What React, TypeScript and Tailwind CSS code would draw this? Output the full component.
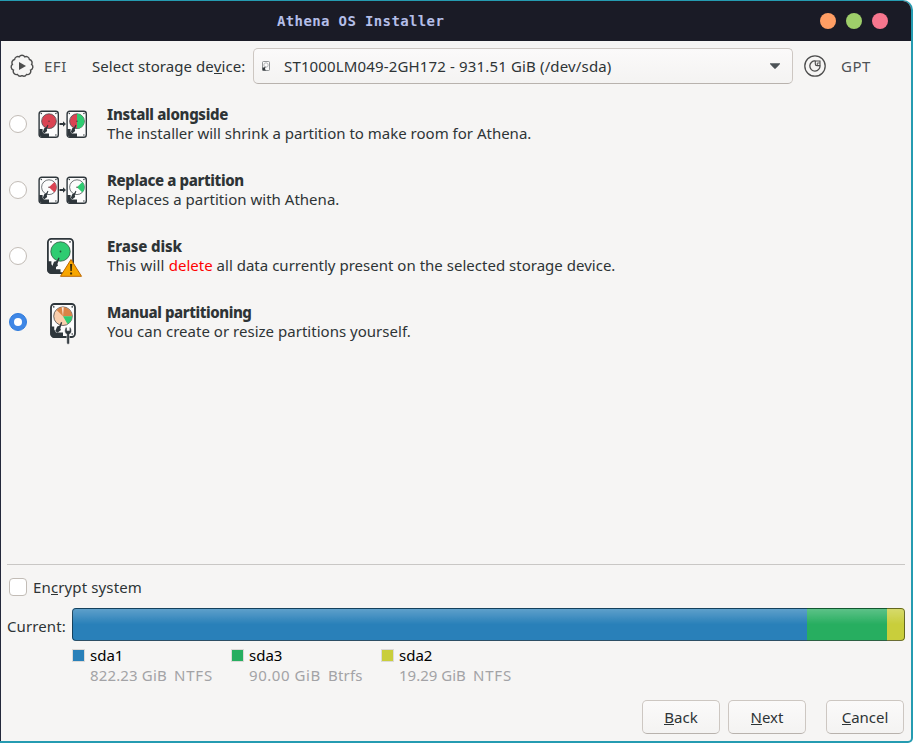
import type { ReactNode } from "react";

function Key({ children }: { children: ReactNode }) {
  return <span className="border-b border-[#2e3436] inline-block h-[17px] leading-[18px]">{children}</span>;
}

function DriveBody() {
  return (
    <>
      <rect x="1.1" y="1.3" width="19.2" height="26" rx="2.6" fill="#fcfcfc" stroke="#2e363b" strokeWidth="1.4" />
      <circle cx="3.3" cy="3.5" r=".7" fill="#2e363b" />
      <circle cx="17.9" cy="3.5" r=".7" fill="#2e363b" />
      <circle cx="17.9" cy="25" r=".7" fill="#2e363b" />
    </>
  );
}

function Arm() {
  return (
    <>
      <path d="M1.3 19H4.6V22L6 23.5H11V27H3.5L1.3 25Z" fill="#2e363b" />
      <path d="M9.6 14.8L10.4 15.3L8.8 19.5L9.2 21L6.4 23.3L4.8 22L6.2 18.3L8 17.6Z" fill="#2e363b" />
    </>
  );
}

function PairIcon({ replace = false }: { replace?: boolean }) {
  return (
    <svg className="h-7 w-[50px]" viewBox="0 0 50 28">
      <g>
        <DriveBody />
        <circle cx="11" cy="11.2" r="7.4" fill={replace ? "#fcfcfc" : "#da4453"} stroke="#4d5357" strokeWidth=".8" />
        {replace && <path d="M11 11.2L16.4 6A7.5 7.5 0 0 1 16.4 16.4Z" fill="#da4453" />}
        <circle cx="11" cy="11.2" r=".7" fill="#4d3539" />
        <Arm />
      </g>
      <path d="M21.5 13H25V11.3L28 14L25 16.7V15H21.5Z" fill="#2e363b" />
      <g transform="translate(28 0)">
        <DriveBody />
        <circle cx="11" cy="11.2" r="7.4" fill={replace ? "#fcfcfc" : "#da4453"} stroke="#4d5357" strokeWidth=".8" />
        {replace ? (
          <path d="M11 11.2L16.4 6A7.5 7.5 0 0 1 16.4 16.4Z" fill="#2ecc71" />
        ) : (
          <path d="M11 3.8A7.4 7.4 0 0 1 11 18.6Z" fill="#2ecc71" />
        )}
        <circle cx="11" cy="11.2" r=".7" fill="#4d3539" />
        <Arm />
      </g>
    </svg>
  );
}

function EraseIcon() {
  return (
    <svg className="mt-[2px] h-10 w-[50px]" viewBox="0 0 50 40">
      <rect x="9.9" y="1.9" width="25.2" height="34.2" rx="3.4" fill="#fcfcfc" stroke="#2e363b" strokeWidth="1.8" />
      <circle cx="13" cy="4.9" r=".8" fill="#2e363b" />
      <circle cx="32" cy="4.9" r=".8" fill="#2e363b" />
      <circle cx="22.5" cy="14.5" r="9.7" fill="#2ecc71" stroke="#2e5940" strokeWidth=".8" />
      <circle cx="22.5" cy="14.5" r=".9" fill="#1d5a34" />
      <path d="M9.5 24.3H13.4V27.2L15 29.5H18V32.3H22.5V36.5H12L9.5 34Z" fill="#2e363b" />
      <path d="M20.6 20.5L21.6 21L19.4 27L20 28.5L16.2 31.5L14.2 29.5L16 24.8L18.6 24Z" fill="#2e363b" />
      <path d="M33 22.5L43.5 39.3H22.5Z" fill="#f7a600" stroke="#bd6800" strokeWidth="1" strokeLinejoin="round" />
      <path d="M32 27H34.2L33.8 34H32.4ZM32.1 35.5H34.1V37.5H32.1Z" fill="#3a2a08" />
    </svg>
  );
}

function ManualIcon() {
  return (
    <svg className="mt-[3px] h-[42px] w-[50px]" viewBox="0 0 50 42">
      <rect x="13" y="1" width="24" height="33" rx="3.4" fill="#fcfcfc" stroke="#2e363b" strokeWidth="1.8" />
      <circle cx="15.8" cy="3.9" r=".8" fill="#2e363b" />
      <circle cx="34.2" cy="3.9" r=".8" fill="#2e363b" />
      <circle cx="34.2" cy="31" r=".8" fill="#2e363b" />
      <circle cx="25" cy="13.2" r="9.3" fill="#fbcfad" stroke="#464646" strokeWidth=".8" />
      <path d="M25 13.2L18.6 6.9A9 9 0 0 1 34 13.2Z" fill="#d88446" />
      <path d="M25 13.2L23.7 4.2H25.7Z" fill="#fbe6d6" />
      <path d="M25 13.2H34A9 9 0 0 1 29.5 21Z" fill="#2ecc71" />
      <path d="M12.5 23.5H16.2V26.5L18 29.5H25V34.8H15L12.5 32Z" fill="#2e363b" />
      <path d="M23 19L24.2 19.5L22.3 25.5L23 27L19.5 29.8L17.3 28L19.2 23.5L21.5 22.8Z" fill="#2e363b" />
      <path d="M27.6 24.5C26 28 27 30.5 28.8 31.2V40A1.2 1.2 0 0 0 31.4 40V31.2C33.3 30.5 34.2 28 32.6 24.5L31.4 24.3V27.6H29V24.3Z" fill="#2e363b" stroke="#f6f5f4" strokeWidth=".5" />
    </svg>
  );
}

function Option({
  icon,
  title,
  titleClass,
  descClass,
  checked = false,
  children,
}: {
  icon: ReactNode;
  title: string;
  titleClass: string;
  descClass: string;
  checked?: boolean;
  children: ReactNode;
}) {
  return (
    <div className="flex h-[66px] items-center pl-2">
      {checked ? (
        <span className="flex size-[18px] items-center justify-center rounded-full border border-[#2f7bdc] bg-[#3f87e6]">
          <span className="size-2 rounded-full bg-white" />
        </span>
      ) : (
        <span className="size-[18px] rounded-full border border-[#c2bcb6] bg-white" />
      )}
      <span className="ml-[11px] flex w-[50px] justify-center">{icon}</span>
      <div className="ml-[19px] whitespace-nowrap leading-[19px]">
        <div className={`font-extrabold ${titleClass}`}>{title}</div>
        <div className={descClass}>{children}</div>
      </div>
    </div>
  );
}

function Legend({
  color,
  name,
  size,
  sizeClass,
  fs,
  fsClass,
  className,
}: {
  color: string;
  name: string;
  size: string;
  sizeClass: string;
  fs: string;
  fsClass: string;
  className: string;
}) {
  return (
    <div className={className}>
      <span className={`mt-[4px] size-[13px] shrink-0 border border-[#dcdad8] ${color}`} />
      <div className="ml-[5px] whitespace-nowrap leading-5">
        <div className="text-black">{name}</div>
        <div className="flex text-[#a3a3a6]">
          <span className={sizeClass}>{size}</span>
          <span className={fsClass}>{fs}</span>
        </div>
      </div>
    </div>
  );
}

function Button({ first, rest, className = "" }: { first: string; rest: string; className?: string }) {
  return (
    <button
      className={`flex h-[34px] w-[78px] items-center justify-center rounded-[5px] border border-[#cdc7c2] border-b-[#b8b2ad] bg-linear-to-b from-[#fbfafa] to-[#f4f3f2] pb-px ${className}`}
    >
      <Key>{first}</Key>
      <span className="inline-block h-[17px] leading-[18px]">{rest}</span>
    </button>
  );
}

export default function App() {
  return (
    <div className="h-[743px] w-[913px] overflow-hidden bg-white">
      <div className="flex h-full flex-col overflow-hidden rounded-tr-[10px] rounded-br-[5px] border-t border-r-2 border-b-2 border-[#259bb1] bg-[#f6f5f4] font-['Noto_Sans',sans-serif] text-[15px] text-[#2e3436]">
        <header className="flex h-10 shrink-0 items-center bg-[#1a1b26] pr-[23px]">
          <h1 className="ml-[277px] whitespace-pre font-['DejaVu_Sans_Mono',monospace] text-[14px] font-bold tracking-[0.37px] text-[#b4bee8]">Athena OS Installer</h1>
          <div className="ml-auto flex gap-[10px]">
            <span className="size-4 rounded-full bg-[#ff9e64]" />
            <span className="size-4 rounded-full bg-[#9ece6a]" />
            <span className="size-4 rounded-full bg-[#f7768e]" />
          </div>
        </header>

        <div className="flex min-h-0 grow flex-col border-l border-[#24283b]">
          <div className="mt-[7px] flex h-9 shrink-0 items-center whitespace-nowrap">
            <svg className="ml-[9px] size-6" viewBox="0 0 24 24" fill="none" stroke="#4d4d4d" strokeWidth="1.4">
              <path d="M9.2 2.8A3.3 3.3 0 0 1 14.8 2.8A3.3 3.3 0 0 1 19.4 5.5A3.3 3.3 0 0 1 21.6 10.4A3.3 3.3 0 0 1 20.5 16.1A3.3 3.3 0 0 1 16.5 20.5A3.3 3.3 0 0 1 12 21.7A3.3 3.3 0 0 1 7.5 20.5A3.3 3.3 0 0 1 3.5 16.1A3.3 3.3 0 0 1 2.4 10.4A3.3 3.3 0 0 1 4.6 5.5A3.3 3.3 0 0 1 9.2 2.8Z" />
              <path d="M9 8L16 12L9 16Z" fill="#4d4d4d" stroke="none" />
            </svg>
            <span className="ml-[10px] w-[48px] tracking-[0.5px] text-[#4d5154]">EFI</span>
            <span className="w-[161px] tracking-[0.06px]">
              Select storage de<Key>v</Key>ice:
            </span>
            <div className="flex h-9 w-[540px] items-center rounded-[5px] border border-[#cdc7c2] border-b-[#b8b2ad] bg-linear-to-b from-[#fbfafa] to-[#f4f3f2]">
              <svg className="ml-[8px] h-[10px] w-2" viewBox="0 0 8 10">
                <rect x=".5" y=".5" width="7" height="9" rx="1" fill="#fcfcfc" stroke="#777b7d" strokeWidth=".8" />
                <circle cx="4" cy="4" r="2.2" fill="none" stroke="#9a9c9e" strokeWidth=".7" />
                <path d="M.5 6.5H2L3.6 5.5L3 8L4 9.5H.5Z" fill="#33393c" />
              </svg>
              <span className="ml-[14px] tracking-[0.15px]">ST1000LM049-2GH172 - 931.51 GiB (/dev/sda)</span>
              <svg className="mr-3 ml-auto h-[6px] w-[10px]" viewBox="0 0 10 6">
                <path d="M0 .3H10V1L5.5 5.7H4.5L0 1Z" fill="#4d5357" />
              </svg>
            </div>
            <svg className="ml-[11px] size-[22px]" viewBox="0 0 22 22" fill="none" stroke="#4d4d4d" strokeWidth="1.3">
              <circle cx="11" cy="11" r="10.2" />
              <path d="M11.3 5.9A5.1 5.1 0 1 0 16 10.6" />
              <path d="M11.3 6H16V10.6H13A1.7 1.7 0 0 1 11.3 8.9Z" strokeWidth="1.1" />
              <path d="M13.3 10.4V8H15.8" strokeWidth=".9" />
            </svg>
            <span className="ml-[15px] tracking-[0.5px] text-[#4d5154]">GPT</span>
          </div>

          <main className="mt-[7px] grow">
            <Option icon={<PairIcon />} title="Install alongside" titleClass="tracking-[-0.31px]" descClass="">
              The installer will shrink a partition to make room for Athena.
            </Option>
            <Option icon={<PairIcon replace />} title="Replace a partition" titleClass="tracking-[-0.38px]" descClass="tracking-[0.02px]">
              Replaces a partition with Athena.
            </Option>
            <Option icon={<EraseIcon />} title="Erase disk" titleClass="tracking-[-0.12px]" descClass="tracking-[0.015px]">
              <span className="tracking-[0.18px]">This will </span>
              <span className="text-[#ff0000]">delete</span> all data currently present on the selected storage device.
            </Option>
            <Option icon={<ManualIcon />} title="Manual partitioning" titleClass="tracking-[-0.43px]" descClass="tracking-[0.02px]" checked>
              You can create or resize partitions yourself.
            </Option>
          </main>

          <section className="mr-[6px] ml-[6px] h-[177px] shrink-0 border-t border-[#c9c7c5]">
            <div className="mt-[13px] ml-[2px] flex h-[18px] items-center">
              <span className="size-[18px] rounded-[4px] border border-[#c2bcb6] bg-white" />
              <span className="ml-[6px] whitespace-nowrap tracking-[0.13px]">
                En<Key>c</Key>rypt system
              </span>
            </div>
            <div className="mt-3 flex h-[33px] items-center">
              <span className="w-[65px] shrink-0 whitespace-nowrap pt-[3px] tracking-[0.1px]">Current:</span>
              <div className="relative flex h-[33px] w-[833px] overflow-hidden rounded-[4px]">
                <div className="w-[735px] bg-[#2980b9]" />
                <div className="w-20 bg-[#27ae60]" />
                <div className="grow bg-[#c9ce3b]" />
                <div className="absolute inset-0 rounded-[4px] border border-black/50 bg-linear-to-b from-white/25 to-transparent to-50%" />
              </div>
            </div>
            <div className="mt-[4px] flex h-10 pl-[65px]">
              <Legend className="flex w-[159px]" color="bg-[#2980b9]" name="sda1" size="822.23 GiB" sizeClass="w-[84px] tracking-[0.15px]" fs="NTFS" fsClass="tracking-[0.8px]" />
              <Legend className="flex w-[150px]" color="bg-[#27ae60]" name="sda3" size="90.00 GiB" sizeClass="w-[79px] tracking-[0.55px]" fs="Btrfs" fsClass="tracking-[0.2px]" />
              <Legend className="flex" color="bg-[#c9ce3b]" name="sda2" size="19.29 GiB" sizeClass="w-[74px]" fs="NTFS" fsClass="tracking-[0.8px]" />
            </div>
            <div className="mt-[15px] mr-px flex justify-end">
              <Button first="B" rest="ack" />
              <Button first="N" rest="ext" className="ml-2" />
              <Button first="C" rest="ancel" className="ml-5" />
            </div>
          </section>
        </div>
      </div>
    </div>
  );
}
